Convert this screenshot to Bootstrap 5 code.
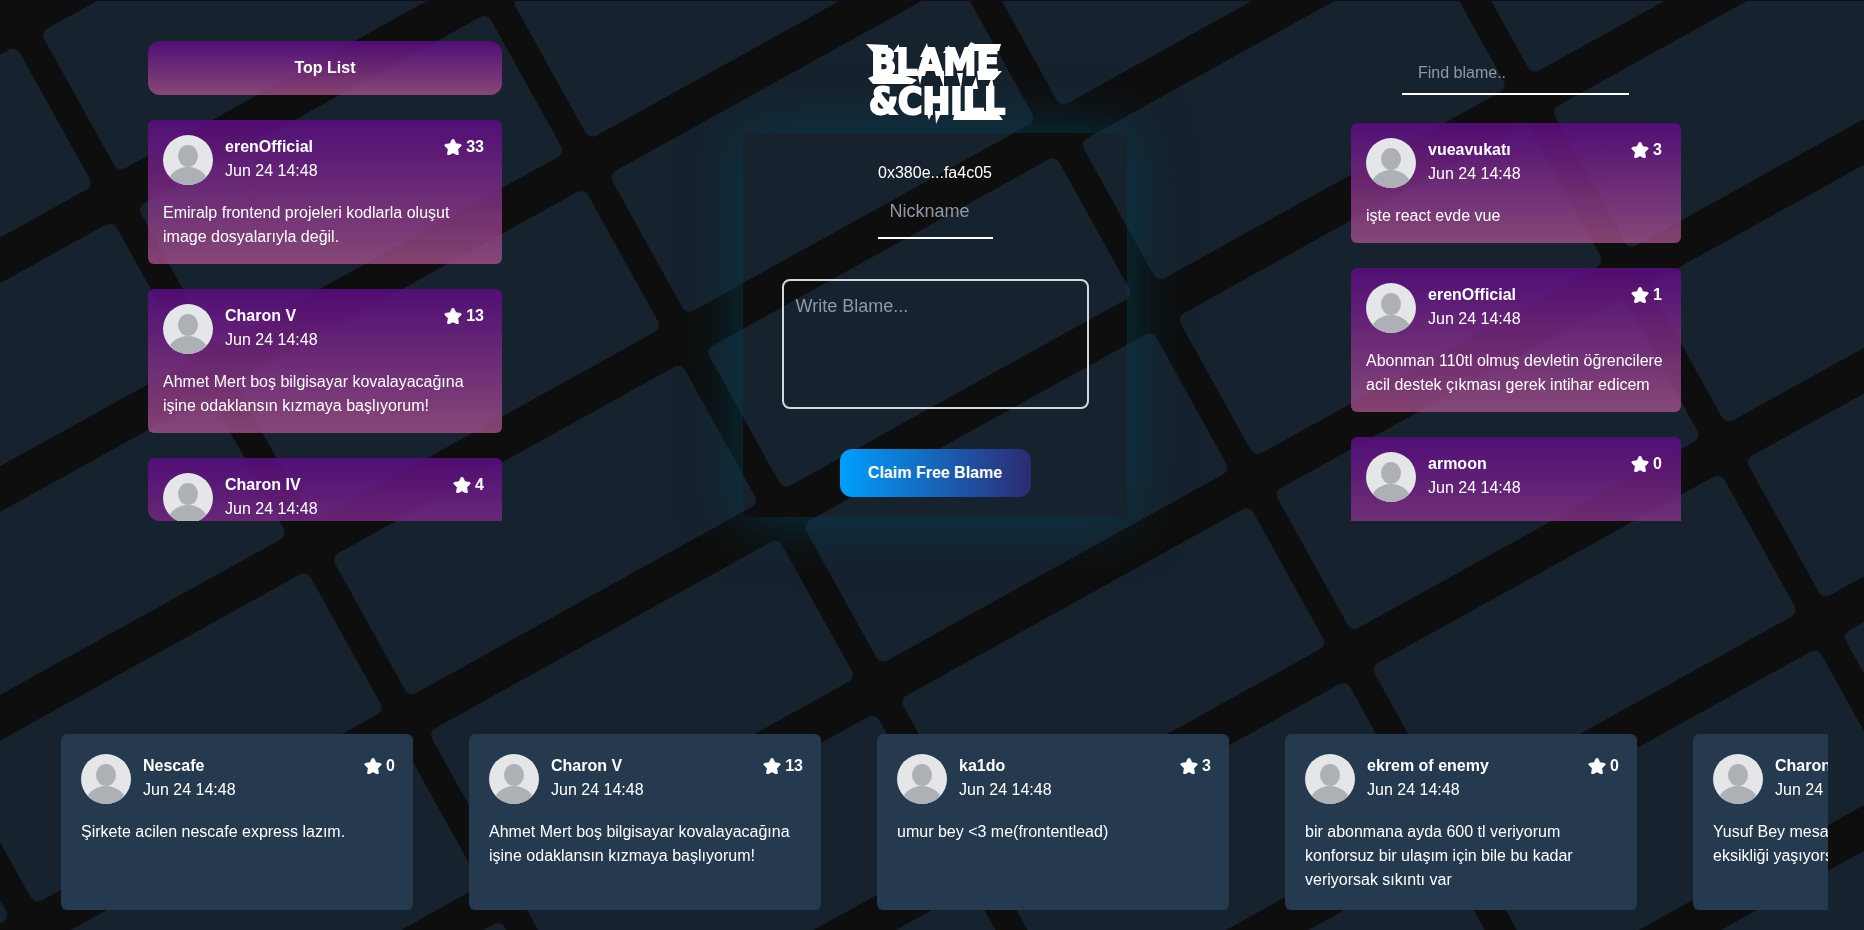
<!DOCTYPE html>
<html lang="tr">
<head>
<meta charset="utf-8">
<meta name="viewport" content="width=device-width, initial-scale=1">
<title>Blame &amp; Chill</title>
<link href="https://cdn.jsdelivr.net/npm/bootstrap@5.3.0/dist/css/bootstrap.min.css" rel="stylesheet">
<style>
  body {
    font-family: "Liberation Sans", Arial, sans-serif;
    font-size: 16px;
    line-height: 24px;
    color: #fff;
    background: #0e0e0e;
    border-top: 1px solid #100c1c;
    overflow: hidden;
  }
  .backdrop { position: fixed; inset: 0; z-index: -1; }
  .hero { padding: 40px 148px 0; }
  .feed { height: 480px; overflow: hidden; display: flex; flex-direction: column; gap: 25px; }
  .feed > * { flex-shrink: 0; }
  .feed-top { width: 371px; border-bottom-left-radius: 12px; }
  .feed-top > * { width: 354px; }
  .feed-find { width: 365px; }
  .feed-find > .blame { width: 330px; }
  .purple { background: linear-gradient(rgba(90, 12, 130, .86), rgba(171, 85, 144, .75)); }
  .feed-title { height: 54px; border-radius: 12px; font-size: 16px; line-height: 24px; }
  .blame { padding: 15px; border-radius: 6px; }
  .avatar { width: 50px; height: 50px; }
  .head { gap: 12px; margin-bottom: 16px; height: 50px; }
  .score { margin-right: 4px; gap: 4px; }
  .feed-top .score { margin-right: 3px; }
  .score svg { width: 18px; height: 16px; }
  .field, .field:focus {
    background: transparent; color: #fff; border: 0; border-bottom: 2px solid #fff;
    border-radius: 0; outline: 0;
  }
  .field::placeholder, .note::placeholder { color: #8f99a3; opacity: 1; }
  .find { width: 227px; height: 44px; padding: 2px 16px 0; margin: 10px 0 3px 51px; }
  .nick { width: 115px; height: 54px; padding: 0 12px; font-size: 18px; }
  .claim-box {
    width: 384px; height: 384px; border-radius: 6px; padding-top: 28px;
    box-shadow: 0 0 60px rgba(4, 62, 82, .85);
  }
  .brand { height: 92px; position: relative; z-index: 1; }
  .brand svg { width: 140px; height: 84px; overflow: visible; }
  .brand text {
    font-family: "DejaVu Sans Condensed", "DejaVu Sans", sans-serif; font-weight: 700; font-size: 37px;
    fill: #fff; stroke: #fff; stroke-width: 2;
  }
  .note, .note:focus {
    width: 307px; height: 130px; resize: none; background: transparent; color: #fff;
    border: 2px solid #d3d8de; border-radius: 8px; padding: 12px; font-size: 18px; line-height: 27px;
    margin-top: 40px; outline: 0;
  }
  .claim, .claim:hover {
    width: 191px; height: 48px; border: 0; border-radius: 12px; margin-top: 40px; padding: 0;
    color: #fff; background: linear-gradient(90deg, #009fff, #2d2a72);
  }
  .strip { margin: 213px 36px 0; padding-left: 25px; gap: 56px; overflow: hidden; }
  .strip .blame { width: 352px; height: 176px; padding: 20px 18px 20px 20px; background: #253a4f; }
  .strip .score { margin-right: 0; }
</style>
</head>
<body>
<svg class="backdrop w-100 h-100" aria-hidden="true">
  <defs>
    <pattern id="tiles" width="428" height="200" patternUnits="userSpaceOnUse" patternTransform="translate(1080 142) rotate(-29)">
      <rect width="400" height="160" rx="8" fill="#16222d"/>
    </pattern>
    <symbol id="star" viewBox="0 0 576 512">
      <path fill="#fff" stroke="#fff" stroke-width="24" d="M316.900 18C311.600 7 300.400 0 288.100 0s-23.400 7-28.800 18L195 150.300 51.400 171.500c-12 1.800-22 10.200-25.700 21.700s-.7 24.200 7.900 32.700L137.800 329 113.200 474.700c-2 12 3 24.200 12.900 31.300s23 8 33.800 2.300l128.300-68.500 128.300 68.500c10.800 5.700 23.900 4.900 33.800-2.300s14.900-19.300 12.900-31.300L438.500 329 542.700 225.900c8.600-8.500 11.700-21.200 7.900-32.700s-13.700-19.900-25.700-21.700L381.200 150.300 316.900 18z"/>
    </symbol>
    <symbol id="person" viewBox="0 0 50 50">
      <clipPath id="disc"><circle cx="25" cy="25" r="25"/></clipPath>
      <g clip-path="url(#disc)">
        <rect width="50" height="50" fill="#e4e6e8"/>
        <ellipse cx="25" cy="21" rx="10" ry="11" fill="#adb1b6"/>
        <ellipse cx="25" cy="51" rx="21" ry="19" fill="#adb1b6"/>
      </g>
    </symbol>
  </defs>
  <rect width="100%" height="100%" fill="url(#tiles)"/>
</svg>

<main class="hero d-flex justify-content-between align-items-start">
  <section class="feed feed-top">
    <h2 class="feed-title purple fw-bold m-0 d-flex align-items-center justify-content-center">Top List</h2>
    <article class="blame purple">
      <div class="head d-flex"><svg class="avatar"><use href="#person"/></svg>
        <div class="flex-grow-1"><div class="fw-bold">erenOfficial</div><div>Jun 24 14:48</div></div>
        <div class="score fw-bold d-flex align-items-center align-self-start"><svg><use href="#star"/></svg>33</div></div>
      <p class="m-0">Emiralp frontend projeleri kodlarla oluşut image dosyalarıyla değil.</p>
    </article>
    <article class="blame purple">
      <div class="head d-flex"><svg class="avatar"><use href="#person"/></svg>
        <div class="flex-grow-1"><div class="fw-bold">Charon V</div><div>Jun 24 14:48</div></div>
        <div class="score fw-bold d-flex align-items-center align-self-start"><svg><use href="#star"/></svg>13</div></div>
      <p class="m-0">Ahmet Mert boş bilgisayar kovalayacağına işine odaklansın kızmaya başlıyorum!</p>
    </article>
    <article class="blame purple">
      <div class="head d-flex"><svg class="avatar"><use href="#person"/></svg>
        <div class="flex-grow-1"><div class="fw-bold">Charon IV</div><div>Jun 24 14:48</div></div>
        <div class="score fw-bold d-flex align-items-center align-self-start"><svg><use href="#star"/></svg>4</div></div>
      <p class="m-0">&nbsp;<br>&nbsp;</p>
    </article>
  </section>

  <section class="d-flex flex-column align-items-center">
    <h1 class="brand m-0">
      <svg viewBox="0 0 140 84" role="img" aria-label="Blame &amp; Chill">
        <text x="6" y="34">BLAME</text>
        <text x="4" y="73">&amp;CHILL</text>
        <path fill="#fff" d="M1 3l22 1v7H8zM3 37l10-4h22l17 6-5 4H8zM34 3l-6 8h6zM62 2l-7 14h10zM84 4l-6 8h8zM106 1l-6 9h34l2-7h-26zM52 30l6 0-3 14zM73 30l6 0 0 17zM92 32l6 0-2 15zM112 30h25l-8 9h-16zM61 70l7 0-4 9zM70 70l7 0-6 13zM90 70h41l7 9H88zM106 48l5-12 2 12zM122 48l5-12 2 12z"/>
      </svg>
    </h1>
    <form class="claim-box d-flex flex-column align-items-center">
      <div>0x380e...fa4c05</div>
      <input class="field nick" type="text" placeholder="Nickname" aria-label="Nickname">
      <textarea class="note" placeholder="Write Blame..." aria-label="Write Blame"></textarea>
      <button class="btn claim fw-bold" type="button">Claim Free Blame</button>
    </form>
  </section>

  <section class="feed feed-find">
    <input class="field find" type="search" placeholder="Find blame.." aria-label="Find blame">
    <article class="blame purple">
      <div class="head d-flex"><svg class="avatar"><use href="#person"/></svg>
        <div class="flex-grow-1"><div class="fw-bold">vueavukatı</div><div>Jun 24 14:48</div></div>
        <div class="score fw-bold d-flex align-items-center align-self-start"><svg><use href="#star"/></svg>3</div></div>
      <p class="m-0">işte react evde vue</p>
    </article>
    <article class="blame purple">
      <div class="head d-flex"><svg class="avatar"><use href="#person"/></svg>
        <div class="flex-grow-1"><div class="fw-bold">erenOfficial</div><div>Jun 24 14:48</div></div>
        <div class="score fw-bold d-flex align-items-center align-self-start"><svg><use href="#star"/></svg>1</div></div>
      <p class="m-0 text-nowrap">Abonman 110tl olmuş devletin öğrencilere<br>acil destek çıkması gerek intihar edicem</p>
    </article>
    <article class="blame purple">
      <div class="head d-flex"><svg class="avatar"><use href="#person"/></svg>
        <div class="flex-grow-1"><div class="fw-bold">armoon</div><div>Jun 24 14:48</div></div>
        <div class="score fw-bold d-flex align-items-center align-self-start"><svg><use href="#star"/></svg>0</div></div>
      <p class="m-0">&nbsp;<br>&nbsp;</p>
    </article>
  </section>
</main>

<section class="strip d-flex">
  <article class="blame flex-shrink-0">
    <div class="head d-flex"><svg class="avatar"><use href="#person"/></svg>
      <div class="flex-grow-1"><div class="fw-bold">Nescafe</div><div>Jun 24 14:48</div></div>
      <div class="score fw-bold d-flex align-items-center align-self-start"><svg><use href="#star"/></svg>0</div></div>
    <p class="m-0">Şirkete acilen nescafe express lazım.</p>
  </article>
  <article class="blame flex-shrink-0">
    <div class="head d-flex"><svg class="avatar"><use href="#person"/></svg>
      <div class="flex-grow-1"><div class="fw-bold">Charon V</div><div>Jun 24 14:48</div></div>
      <div class="score fw-bold d-flex align-items-center align-self-start"><svg><use href="#star"/></svg>13</div></div>
    <p class="m-0">Ahmet Mert boş bilgisayar kovalayacağına işine odaklansın kızmaya başlıyorum!</p>
  </article>
  <article class="blame flex-shrink-0">
    <div class="head d-flex"><svg class="avatar"><use href="#person"/></svg>
      <div class="flex-grow-1"><div class="fw-bold">ka1do</div><div>Jun 24 14:48</div></div>
      <div class="score fw-bold d-flex align-items-center align-self-start"><svg><use href="#star"/></svg>3</div></div>
    <p class="m-0">umur bey &lt;3 me(frontentlead)</p>
  </article>
  <article class="blame flex-shrink-0">
    <div class="head d-flex"><svg class="avatar"><use href="#person"/></svg>
      <div class="flex-grow-1"><div class="fw-bold">ekrem of enemy</div><div>Jun 24 14:48</div></div>
      <div class="score fw-bold d-flex align-items-center align-self-start"><svg><use href="#star"/></svg>0</div></div>
    <p class="m-0">bir abonmana ayda 600 tl veriyorum konforsuz bir ulaşım için bile bu kadar veriyorsak sıkıntı var</p>
  </article>
  <article class="blame flex-shrink-0">
    <div class="head d-flex"><svg class="avatar"><use href="#person"/></svg>
      <div class="flex-grow-1"><div class="fw-bold">Charon</div><div>Jun 24 14:48</div></div></div>
    <p class="m-0">Yusuf Bey mesaj<br>eksikliği yaşıyorsun</p>
  </article>
</section>
<script src="https://cdn.jsdelivr.net/npm/bootstrap@5.3.0/dist/js/bootstrap.bundle.min.js"></script>
</body>
</html>
